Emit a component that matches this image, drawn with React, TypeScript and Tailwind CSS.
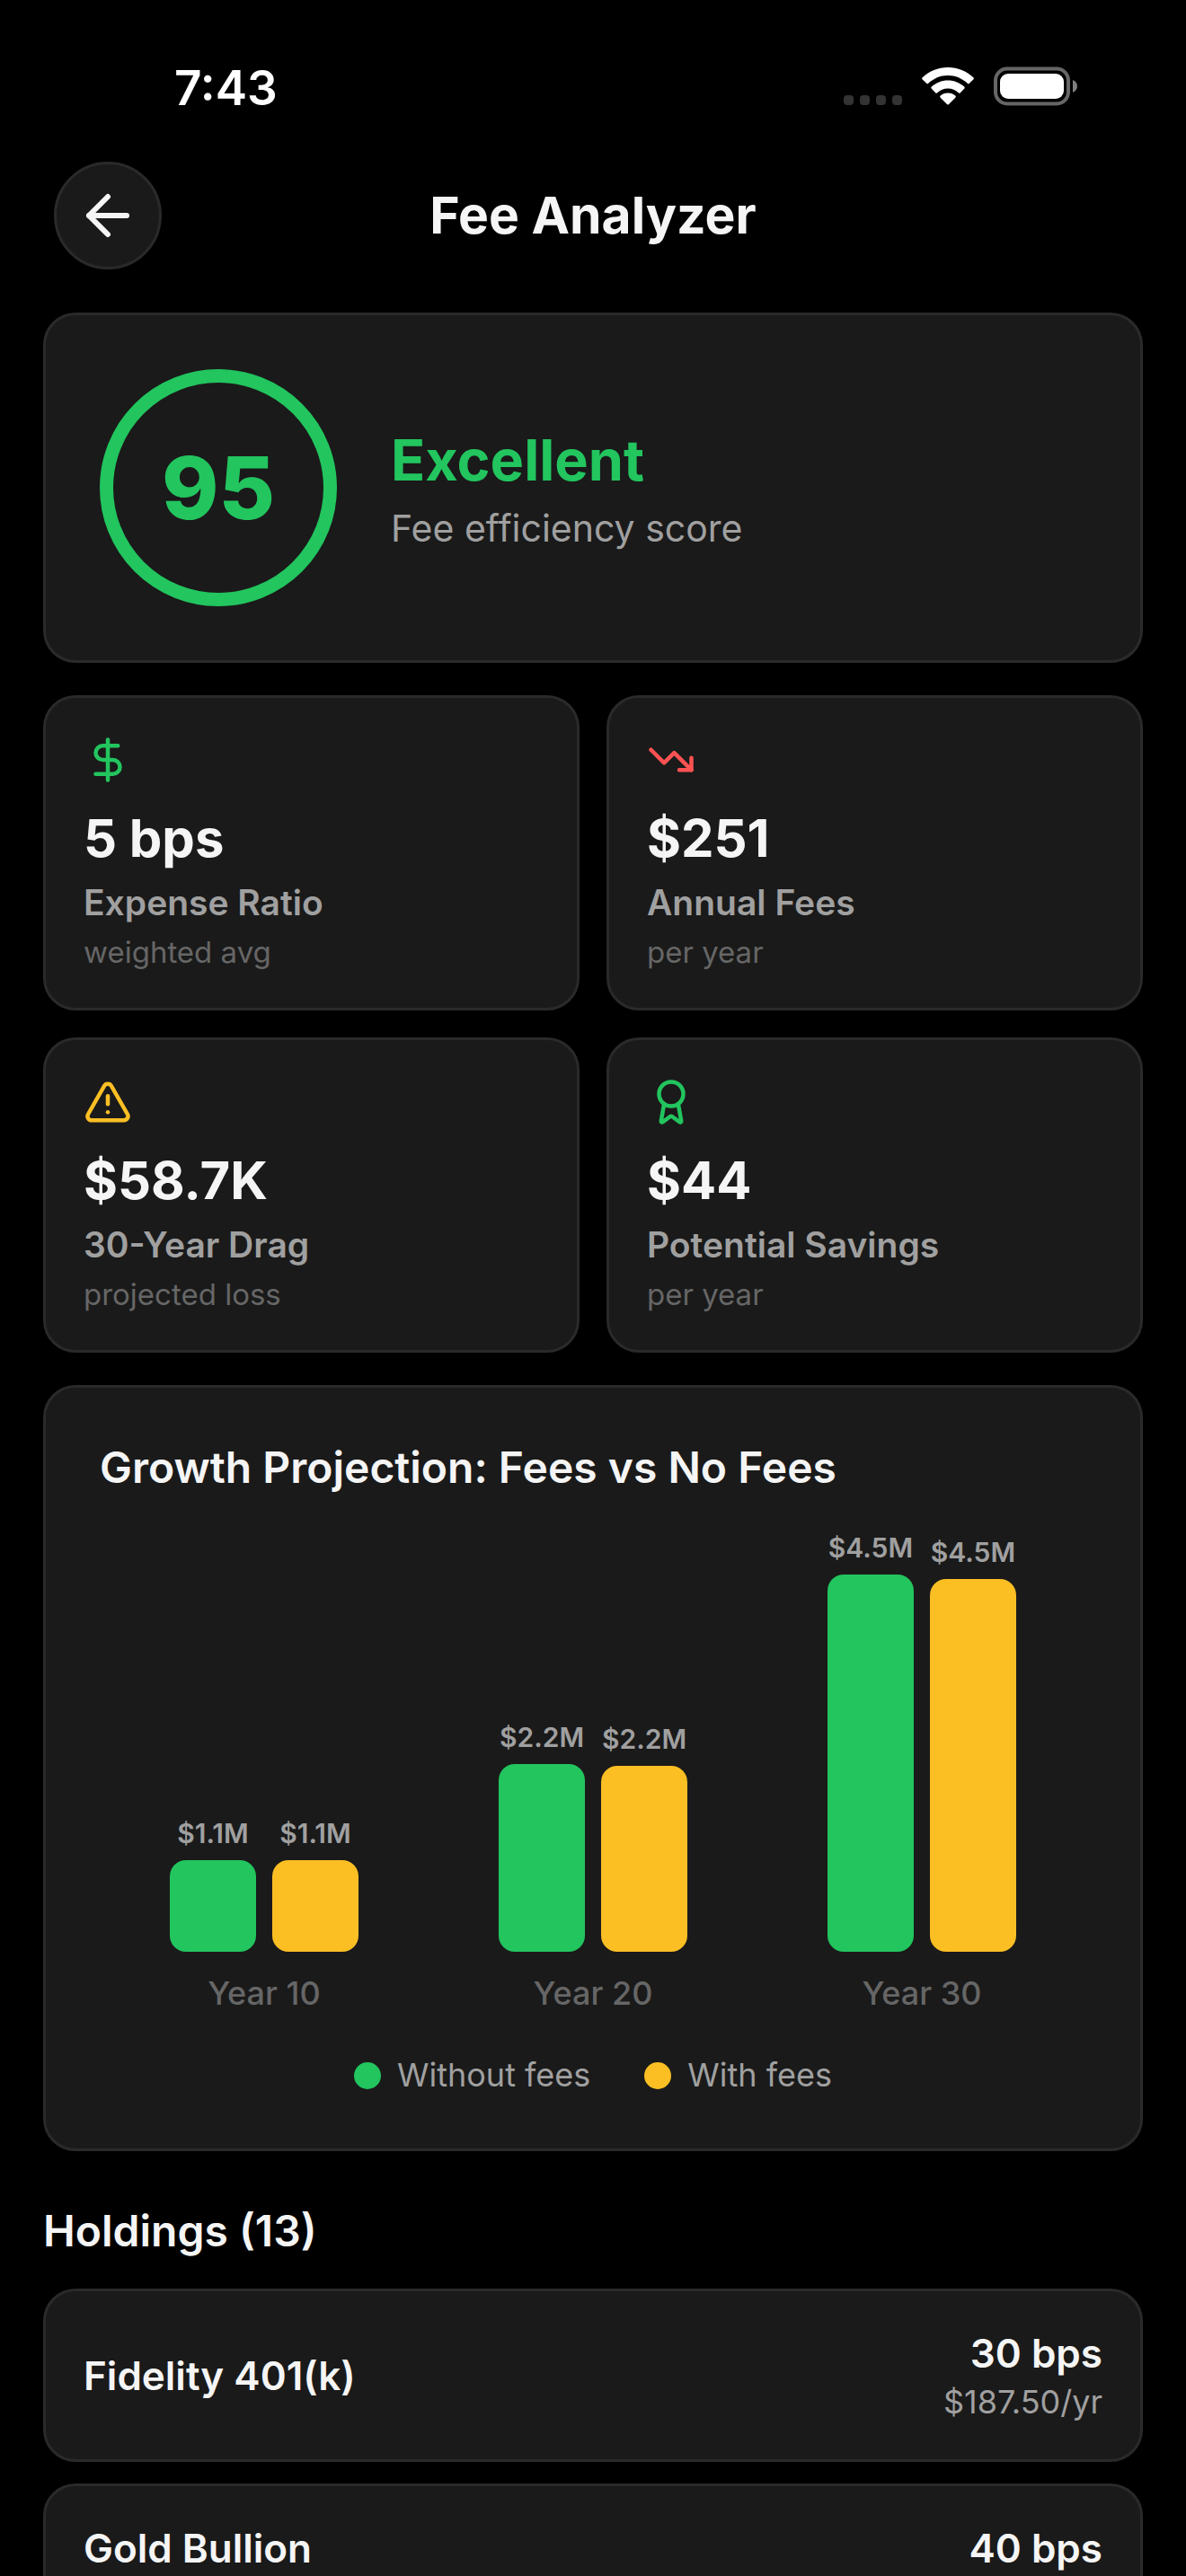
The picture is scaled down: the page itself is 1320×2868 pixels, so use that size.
import { ArrowLeft, Award, DollarSign, TrendingDown, TriangleAlert } from 'lucide-react';
import type { LucideIcon } from 'lucide-react';

interface Stat {
  icon: LucideIcon;
  iconClass: string;
  value: string;
  label: string;
  sub: string;
}

interface Projection {
  year: number;
  withoutFees: number;
  withFees: number;
}

interface Holding {
  name: string;
  bps: number;
  annualFee?: number;
}

const STATS: Stat[] = [
  { icon: DollarSign, iconClass: 'text-[#22c55e]', value: '5 bps', label: 'Expense Ratio', sub: 'weighted avg' },
  { icon: TrendingDown, iconClass: 'text-[#ff5252]', value: '$251', label: 'Annual Fees', sub: 'per year' },
  { icon: TriangleAlert, iconClass: 'text-[#fbbf24]', value: '$58.7K', label: '30-Year Drag', sub: 'projected loss' },
  { icon: Award, iconClass: 'text-[#22c55e]', value: '$44', label: 'Potential Savings', sub: 'per year' },
];

const PROJECTIONS: Projection[] = [
  { year: 10, withoutFees: 1.1, withFees: 1.098 },
  { year: 20, withoutFees: 2.245, withFees: 2.222 },
  { year: 30, withoutFees: 4.51, withFees: 4.455 },
];

const HOLDINGS: Holding[] = [
  { name: 'Fidelity 401(k)', bps: 30, annualFee: 187.5 },
  { name: 'Gold Bullion', bps: 40 },
];

const HOLDING_COUNT = 13;
const BAR_MAX_HEIGHT = 420;
const MAX_VALUE = Math.max(...PROJECTIONS.map((p) => p.withoutFees));

function formatMillions(value: number): string {
  return `$${value.toFixed(1)}M`;
}

function StatusBar() {
  return (
    <div className="flex items-start justify-between pt-[66px] pb-[50px] pl-[194px] pr-[120px]">
      <span className="text-[53px] leading-[64px] font-semibold text-white">7:43</span>
      <div className="mt-2 flex items-center">
        <svg width="65" height="44" viewBox="0 0 65 44" fill="#333333" aria-hidden>
          <rect x="0" y="32" width="11" height="11" rx="4" />
          <rect x="18" y="32" width="11" height="11" rx="4" />
          <rect x="36" y="32" width="11" height="11" rx="4" />
          <rect x="54" y="32" width="11" height="11" rx="4" />
        </svg>
        <svg className="ml-[22px]" width="58" height="44" viewBox="0 0 58 44" fill="white" aria-hidden>
          <path d="M29 1C18.200 1 8.200 5.200.7 12.200a1.500 1.500 0 0 0 0 2.200l4.400 4.400a1.500 1.500 0 0 0 2.100 0C13 13.400 20.600 10 29 10s16 3.400 21.800 8.800a1.500 1.500 0 0 0 2.100 0l4.400-4.400a1.500 1.500 0 0 0 0-2.200C49.800 5.200 39.800 1 29 1Z" />
          <path d="M29 15.500c-7 0-13.400 2.700-18.200 7.100a1.500 1.500 0 0 0 0 2.200l4.400 4.400a1.500 1.500 0 0 0 2.100 0c3.100-2.800 7.200-4.700 11.700-4.700s8.600 1.900 11.700 4.700a1.500 1.500 0 0 0 2.100 0l4.400-4.400a1.500 1.500 0 0 0 0-2.200C42.400 18.200 36 15.500 29 15.500Z" />
          <path d="M29 29.500c-3.200 0-6.100 1.200-8.300 3.100a1.400 1.400 0 0 0 0 2.100l7.300 7.400a1.400 1.400 0 0 0 2 0l7.300-7.400a1.400 1.400 0 0 0 0-2.100c-2.200-1.900-5.100-3.100-8.300-3.100Z" />
        </svg>
        <svg className="ml-[22px]" width="94" height="44" viewBox="0 0 94 44" aria-hidden>
          <rect x="2" y="2.500" width="81" height="39" rx="13" fill="none" stroke="#666666" strokeWidth="4" />
          <rect x="7" y="8" width="71" height="28" rx="9" fill="white" />
          <path d="M88 15v14c3-1.200 5-3.900 5-7s-2-5.800-5-7Z" fill="#808080" />
        </svg>
      </div>
    </div>
  );
}

function Header() {
  return (
    <header className="flex items-center justify-between px-[60px] pb-12">
      <button
        type="button"
        aria-label="Back"
        className="flex size-[120px] items-center justify-center rounded-full border-3 border-[#2a2a2a] bg-[#1a1a1a]"
      >
        <ArrowLeft size={72} />
      </button>
      <h1 className="text-[57px] leading-[72px] font-bold">Fee Analyzer</h1>
      <div className="w-[120px]" />
    </header>
  );
}

function ScoreCard() {
  return (
    <section className="flex items-center gap-[60px] rounded-[36px] border-3 border-[#2a2a2a] bg-[#1a1a1a] p-[60px]">
      <div className="flex size-[264px] items-center justify-center rounded-full border-[15px] border-[#22c55e] text-8xl font-extrabold text-[#22c55e]">
        95
      </div>
      <div>
        <p className="text-[63px] leading-[78px] font-bold text-[#22c55e]">Excellent</p>
        <p className="mt-3 text-[41px] leading-[50px] text-[#a0a0a0]">Fee efficiency score</p>
      </div>
    </section>
  );
}

function StatCard({ stat }: { stat: Stat }) {
  const Icon = stat.icon;
  return (
    <div className="rounded-[36px] border-3 border-[#2a2a2a] bg-[#1a1a1a] p-[42px]">
      <Icon size={54} className={stat.iconClass} />
      <p className="mt-6 text-[58px] leading-[72px] font-bold">{stat.value}</p>
      <p className="mt-3 text-[39px] leading-[47px] font-semibold text-[#a0a0a0]">{stat.label}</p>
      <p className="mt-3 text-[33px] leading-[40px] text-[#666666]">{stat.sub}</p>
    </div>
  );
}

function Bar({ value, colorClass }: { value: number; colorClass: string }) {
  return (
    <div className="flex w-24 flex-col items-center gap-3">
      <span className="text-[30px] leading-[36px] font-semibold text-[#a0a0a0]">{formatMillions(value)}</span>
      <div
        className={`w-full rounded-[18px] ${colorClass}`}
        style={{ height: Math.round((value / MAX_VALUE) * BAR_MAX_HEIGHT) }}
      />
    </div>
  );
}

function LegendItem({ label, colorClass }: { label: string; colorClass: string }) {
  return (
    <div className="flex items-center gap-[18px]">
      <span className={`size-[30px] rounded-full ${colorClass}`} />
      <span className="text-[36px] leading-[43px] text-[#a0a0a0]">{label}</span>
    </div>
  );
}

function GrowthChart() {
  return (
    <section className="rounded-[36px] border-3 border-[#2a2a2a] bg-[#1a1a1a] p-[60px]">
      <h2 className="text-[48px] leading-[57px] font-semibold">Growth Projection: Fees vs No Fees</h2>
      <div className="mt-[43px] grid grid-cols-3 items-end">
        {PROJECTIONS.map((p) => (
          <div key={p.year} className="flex flex-col items-center gap-6">
            <div className="flex items-end gap-[18px]">
              <Bar value={p.withoutFees} colorClass="bg-[#22c55e]" />
              <Bar value={p.withFees} colorClass="bg-[#fbbf24]" />
            </div>
            <span className="text-[36px] leading-[44px] font-medium text-[#666666]">Year {p.year}</span>
          </div>
        ))}
      </div>
      <div className="mt-12 flex justify-center gap-[60px]">
        <LegendItem label="Without fees" colorClass="bg-[#22c55e]" />
        <LegendItem label="With fees" colorClass="bg-[#fbbf24]" />
      </div>
    </section>
  );
}

function HoldingRow({ holding }: { holding: Holding }) {
  return (
    <li className="flex items-center justify-between rounded-[36px] border-3 border-[#2a2a2a] bg-[#1a1a1a] p-[42px]">
      <span className="text-[44px] leading-[54px] font-semibold">{holding.name}</span>
      <div className="text-right">
        <p className="text-[44px] leading-[54px] font-semibold">{holding.bps} bps</p>
        {holding.annualFee != null && (
          <p className="mt-[6px] text-[36px] leading-[43px] text-[#a0a0a0]">${holding.annualFee.toFixed(2)}/yr</p>
        )}
      </div>
    </li>
  );
}

export default function App() {
  return (
    <div className="flex h-screen flex-col bg-black font-['Inter',sans-serif] text-[#f5f5f5]">
      <StatusBar />
      <Header />
      <main className="min-h-0 flex-1 space-y-9 overflow-y-auto px-12 [scrollbar-width:none]">
        <ScoreCard />
        <section className="grid grid-cols-2 gap-[30px]">
          {STATS.map((stat) => (
            <StatCard key={stat.label} stat={stat} />
          ))}
        </section>
        <GrowthChart />
        <section className="pt-6 pb-12">
          <h2 className="text-[48px] leading-[57px] font-semibold">Holdings ({HOLDING_COUNT})</h2>
          <ul className="mt-9 space-y-6">
            {HOLDINGS.map((h) => (
              <HoldingRow key={h.name} holding={h} />
            ))}
          </ul>
        </section>
      </main>
    </div>
  );
}
